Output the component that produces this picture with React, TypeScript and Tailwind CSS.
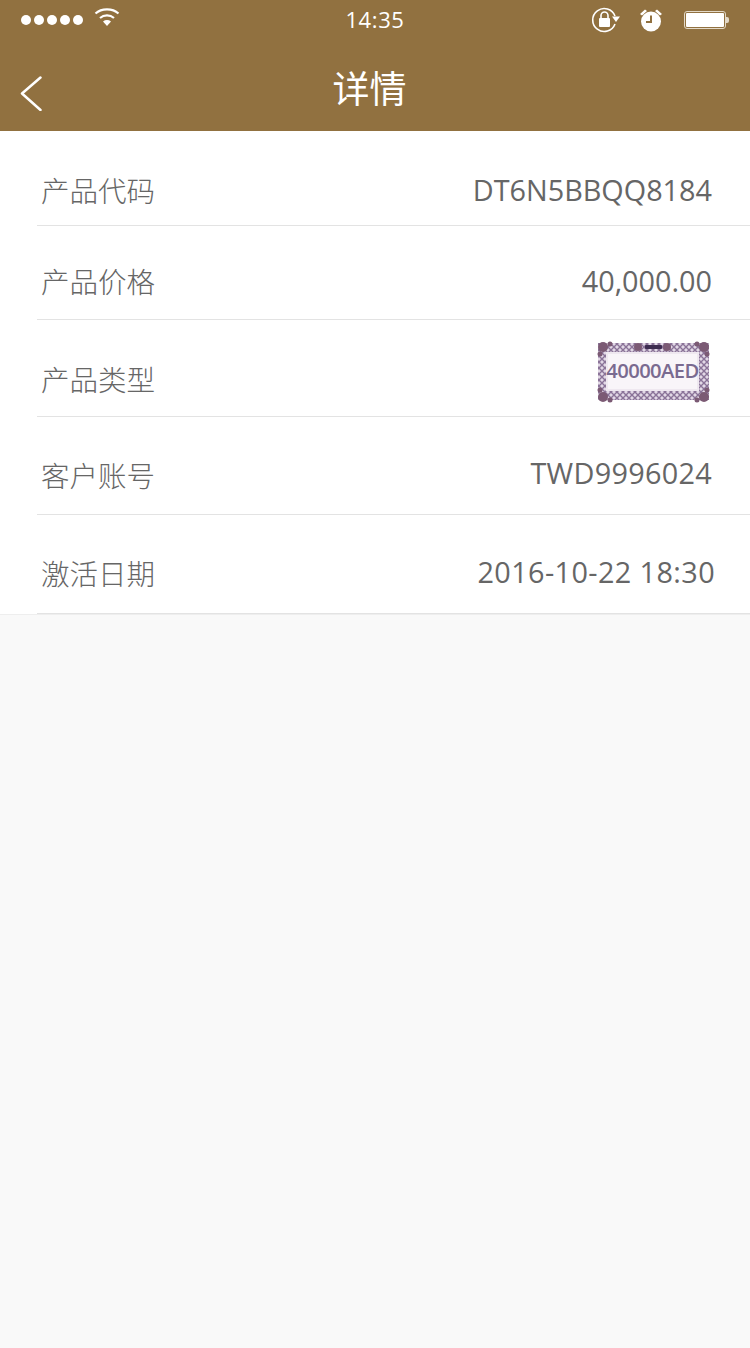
import React from 'react';

const rows = [
    { label: '产品代码', value: 'DT6N5BBQQ8184', h: 'h-[95px]', pt: 'pt-[36px]', vx: 'pr-[38px]', vc: 'mt-[1px]' },
    { label: '产品价格', value: '40,000.00', h: 'h-[94px]', pt: 'pt-[32px]', vx: 'pr-[38px]', vc: 'mt-[1px]' },
    { label: '产品类型', value: '', h: 'h-[97px]', pt: 'pt-[36px]', vx: 'pr-[38px]', vc: '' },
    { label: '客户账号', value: 'TWD9996024', h: 'h-[98px]', pt: 'pt-[35px]', vx: 'pr-[38px]', vc: 'mt-[-1px] tracking-[0.3px]' },
    { label: '激活日期', value: '2016-10-22 18:30', h: 'h-[99px]', pt: 'pt-[35px]', vx: 'pr-[35px]', vc: 'tracking-[0.4px]' },
];

// corner ornament, drawn once per corner
const corners = [[7, 6], [108, 6], [7, 56], [108, 56]];

const Voucher = () => (
    <div className="relative w-[116px] h-[62px] mt-[-15px]">
        <svg className="absolute inset-0 blur-[0.5px]" width="116" height="62" viewBox="0 0 116 62">
            <defs>
                <pattern id="lattice" width="6" height="6" patternUnits="userSpaceOnUse">
                    <rect width="6" height="6" fill="#e2d8e6" />
                    <path d="M0 0L6 6M6 0L0 6" stroke="#8a7398" strokeWidth="1.4" />
                </pattern>
            </defs>
            <rect x="2" y="2" width="111" height="57" fill="url(#lattice)" />
            <rect x="11" y="12" width="91" height="37" fill="#f9f5f9" stroke="#efe8f0" strokeWidth="2" />
            <g fill="#7b5a74">
                {corners.map(([x, y]) => (
                    <g key={`${x}-${y}`}>
                        <circle cx={x} cy={y} r="5" />
                        <circle cx={x + (x < 50 ? 7 : -7)} cy={y + (y < 30 ? -3 : 3)} r="2.5" />
                        <circle cx={x + (x < 50 ? -3 : 3)} cy={y + (y < 30 ? 7 : -7)} r="2.5" />
                    </g>
                ))}
                <circle cx="42" cy="6" r="4" />
                <circle cx="71" cy="6" r="4" />
            </g>
            <rect x="49" y="4" width="17" height="4" rx="1" fill="#3d2c50" />
        </svg>
        <span className="absolute left-[11px] w-[91px] top-[11px] h-[37px] flex items-center justify-center font-['Open_Sans',sans-serif] text-[20.2px] font-semibold tracking-[-0.6px] text-[#7a6a90] whitespace-nowrap">
            40000AED
        </span>
    </div>
);

export default function App() {
    return (
        <div className="w-[750px] h-[1348px] bg-[#f9f9f9] font-['Noto_Sans_CJK_SC',sans-serif] overflow-hidden">
            {/* nav bar */}
            <div className="relative h-[131px] bg-[#917140] text-white">
                <div className="flex items-center justify-between h-[40px] pl-[21px] pr-[21px]">
                    <div className="flex items-center gap-[3px] w-[200px] mt-[-1px]">
                        {[0, 1, 2, 3, 4].map(i => (
                            <span key={i} className="w-[10px] h-[10px] rounded-full bg-white" />
                        ))}
                        <svg className="ml-[8px] mt-[-6px]" width="26" height="20" viewBox="0 0 26 20" fill="none">
                            <path d="M1.5 6.5C7.5 1 18.5 1 24.5 6.5" stroke="white" strokeWidth="2.2" />
                            <path d="M6 11C10 7.6 16 7.6 20 11" stroke="white" strokeWidth="2.2" />
                            <path d="M9 14.5C11.5 12.6 14.5 12.6 17 14.5L13 19Z" fill="white" />
                        </svg>
                    </div>
                    <span className="font-['Open_Sans',sans-serif] text-[22px] tracking-[0.6px] mt-[-1px]">14:35</span>
                    <div className="flex items-center justify-end w-[200px]">
                        <svg width="30" height="26" viewBox="0 0 30 26" fill="none">
                            <path d="M24 17A11.5 11.5 0 1 1 24 9" stroke="white" strokeWidth="1.6" />
                            <path d="M21 9.5H29L25 15Z" fill="white" />
                            <rect x="8" y="11" width="11" height="9" rx="1" fill="white" />
                            <path d="M10 11V8.5a3.5 3.5 0 0 1 7 0V11" stroke="white" strokeWidth="1.6" />
                        </svg>
                        <svg className="ml-[18px]" width="24" height="24" viewBox="0 0 24 24">
                            <circle cx="12" cy="13.5" r="10" fill="white" />
                            <path d="M1 6L6 1.5L8 3L3 7.5ZM23 6L18 1.5L16 3L21 7.5Z" fill="white" />
                            <path d="M12 7.5V14H7" stroke="#917140" strokeWidth="2" fill="none" />
                        </svg>
                        <div className="ml-[21px] flex items-center">
                            <div className="w-[42px] h-[18px] rounded-[3px] border border-[#e3d9c8] p-[1px]">
                                <div className="w-full h-full bg-white rounded-[1px]" />
                            </div>
                            <div className="w-[3px] h-[6px] bg-[#e3d9c8] rounded-r-[2px]" />
                        </div>
                    </div>
                </div>
                <svg className="absolute left-[20px] top-[76px]" width="22" height="35" viewBox="0 0 22 35" fill="none">
                    <path d="M20.5 1.5L2 17.5L20.5 34" stroke="white" strokeWidth="2.5" strokeLinecap="round" strokeLinejoin="round" />
                </svg>
                <h1 className="absolute left-0 right-[11px] top-[62px] text-center text-[37px] leading-[50px] font-normal">详情</h1>
            </div>

            {/* detail rows */}
            <div className="bg-white border-b border-[#eeeeee] pl-[37px]">
                {rows.map(row => (
                    <div
                        key={row.label}
                        className={`flex items-start justify-between border-b border-[#e3e3e3] pl-[4px] text-[#666666] ${row.h} ${row.pt} ${row.vx}`}
                    >
                        <span className="text-[28.5px] leading-[46px] font-light">{row.label}</span>
                        {row.value ? (
                            <span className={`font-['Open_Sans',sans-serif] text-[28.8px] leading-[44px] ${row.vc}`}>{row.value}</span>
                        ) : (
                            <Voucher />
                        )}
                    </div>
                ))}
            </div>
        </div>
    );
}
